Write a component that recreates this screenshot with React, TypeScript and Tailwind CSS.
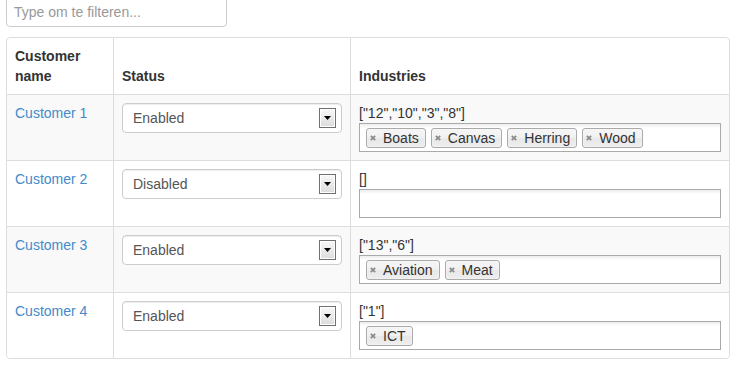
const customers = [
  { name: 'Customer 1', status: 'Enabled', ids: '["12","10","3","8"]', tags: ['Boats', 'Canvas', 'Herring', 'Wood'] },
  { name: 'Customer 2', status: 'Disabled', ids: '[]', tags: [] },
  { name: 'Customer 3', status: 'Enabled', ids: '["13","6"]', tags: ['Aviation', 'Meat'] },
  { name: 'Customer 4', status: 'Enabled', ids: '["1"]', tags: ['ICT'] },
]

function SelectArrow() {
  return (
    <div className="flex h-[20px] w-[17px] shrink-0 items-center justify-center border border-[#707070] bg-[linear-gradient(#f8f8f8,#dcdcdc)] shadow-[inset_0_0_0_1px_#fff]">
      <svg width="7" height="4" viewBox="0 0 7 4">
        <path d="M0 0h7L3.5 4z" fill="#000" />
      </svg>
    </div>
  )
}

function StatusSelect({ value }: { value: string }) {
  return (
    <div className="flex h-[30px] items-center justify-between rounded-[4px] border border-[#ccc] bg-white pl-[10px] pr-[5px] text-[#555] shadow-[inset_0_1px_1px_rgba(0,0,0,0.075)]">
      <span>{value}</span>
      <SelectArrow />
    </div>
  )
}

function Tag({ label }: { label: string }) {
  return (
    <div className="flex h-[20px] items-center rounded-[3px] border border-[#aaa] bg-[linear-gradient(#f4f4f4_20%,#f0f0f0_50%,#e8e8e8_52%,#eee_100%)] pl-[3px] pr-[6px] leading-[18px] text-[#333] shadow-[inset_0_0_2px_#fff]">
      <svg width="6" height="6" viewBox="0 0 6 6" className="shrink-0">
        <path d="M0.8 0.8l4.4 4.4M5.2 0.8L0.8 5.2" stroke="#8a8a8a" strokeWidth="1.7" />
      </svg>
      <span className="ml-[7px]">{label}</span>
    </div>
  )
}

export default function App() {
  return (
    <div className="h-[377px] w-[738px] overflow-hidden bg-white px-[6px] font-['Liberation_Sans',Arial,sans-serif] text-[14px] leading-5 text-[#333]">
      {/* filter box, top edge is cut off in the shot */}
      <div className="-mt-[4px] flex h-[31px] w-[221px] items-center rounded-[4px] border border-[#ccc] px-[7px] text-[#999]">
        Type om te filteren...
      </div>

      <div className="mt-[10px] grid w-[724px] grid-cols-[106px_237px_379px] overflow-hidden rounded-[4px] border border-[#ddd]">
        {/* header */}
        <div className="flex flex-col justify-end p-2 font-bold">Customer name</div>
        <div className="flex flex-col justify-end border-l border-[#ddd] p-2 font-bold">Status</div>
        <div className="flex flex-col justify-end border-l border-[#ddd] p-2 font-bold">Industries</div>

        {customers.map((c, i) => {
          const bg = i % 2 === 0 ? 'bg-[#f9f9f9]' : 'bg-white'
          return (
            <div key={c.name} className="contents">
              <div className={`border-t border-[#ddd] p-2 ${bg}`}>
                <a href="#" className="text-[#428bca]">{c.name}</a>
              </div>
              <div className={`border-l border-t border-[#ddd] p-2 ${bg}`}>
                <StatusSelect value={c.status} />
              </div>
              <div className={`border-l border-t border-[#ddd] p-2 ${bg}`}>
                <p>{c.ids}</p>
                <div className="flex h-[29px] items-start gap-[5px] border border-[#aaa] bg-[linear-gradient(#eee_1%,#fff_15%)] pl-[6px] pt-[4px]">
                  {c.tags.map((t) => (
                    <Tag key={t} label={t} />
                  ))}
                </div>
              </div>
            </div>
          )
        })}
      </div>
    </div>
  )
}
